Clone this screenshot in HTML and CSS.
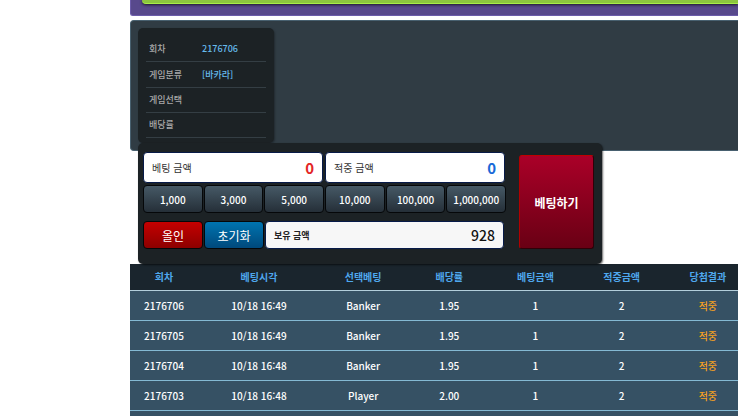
FILE: index.html
```html
<!DOCTYPE html>
<html lang="ko">
<head>
<meta charset="utf-8">
<title>바카라</title>
<link rel="stylesheet" href="styles.css">
</head>
<body>
<main class="page">
  <div class="banner"><div class="banner-bar"></div></div>
  <section class="game">
    <dl class="info">
      <div class="info-row"><dt>회차</dt><dd>2176706</dd></div>
      <div class="info-row"><dt>게임분류</dt><dd>[바카라]</dd></div>
      <div class="info-row"><dt>게임선택</dt><dd></dd></div>
      <div class="info-row"><dt>배당률</dt><dd></dd></div>
    </dl>
  </section>
  <form class="bet">
    <div class="bet-fields">
      <div class="amounts">
        <div class="field"><label for="stake">베팅 금액</label><input id="stake" class="red" type="text" value="0"></div>
        <div class="field"><label for="win">적중 금액</label><input id="win" class="blue" type="text" value="0"></div>
      </div>
      <div class="chips">
        <button type="button" class="chip">1,000</button>
        <button type="button" class="chip">3,000</button>
        <button type="button" class="chip">5,000</button>
        <button type="button" class="chip">10,000</button>
        <button type="button" class="chip">100,000</button>
        <button type="button" class="chip">1,000,000</button>
      </div>
      <div class="actions">
        <button type="button" class="chip all-in">올인</button>
        <button type="reset" class="chip clear">초기화</button>
        <div class="field balance"><label for="balance">보유 금액</label><input id="balance" type="text" value="928" readonly></div>
      </div>
    </div>
    <button type="button" class="submit">베팅하기</button>
  </form>
  <div class="history-wrap">
    <table class="history">
      <colgroup><col class="c-round"><col class="c-time"><col><col><col><col><col></colgroup>
      <thead>
        <tr><th>회차</th><th>베팅시각</th><th>선택베팅</th><th>배당률</th><th>베팅금액</th><th>적중금액</th><th>당첨결과</th></tr>
      </thead>
      <tbody>
        <tr><td>2176706</td><td>10/18 16:49</td><td>Banker</td><td>1.95</td><td>1</td><td>2</td><td class="hit">적중</td></tr>
        <tr><td>2176705</td><td>10/18 16:49</td><td>Banker</td><td>1.95</td><td>1</td><td>2</td><td class="hit">적중</td></tr>
        <tr><td>2176704</td><td>10/18 16:48</td><td>Banker</td><td>1.95</td><td>1</td><td>2</td><td class="hit">적중</td></tr>
        <tr><td>2176703</td><td>10/18 16:48</td><td>Player</td><td>2.00</td><td>1</td><td>2</td><td class="hit">적중</td></tr>
      </tbody>
    </table>
  </div>
</main>
</body>
</html>
```
FILE: styles.css
```css
* { box-sizing: border-box; }

body {
  margin: 0;
  background: #fff;
  font-family: "Noto Sans CJK KR", sans-serif;
  font-size: 10px;
}

button, input { font-family: inherit; }

.page { margin-left: 130px; }

.banner {
  padding: 0 0 11px 11px;
  background: #58498c;
  border: 1px solid #6c5caa;
  border-width: 0 0 1px 1px;
  border-radius: 0 0 0 3px;
}

.banner-bar {
  height: 4px;
  background: #8cc63f;
  border-bottom: 1px solid #a8ee48;
  border-radius: 0 0 0 4px;
  box-shadow: 0 1px 3px rgba(0, 0, 0, 0.7);
}

.game {
  margin-top: 4px;
  padding: 7px;
  background: #303c44;
  border: 1px solid #48606f;
  border-right: 0;
  border-radius: 4px 0 0 4px;
}

.info {
  width: 136px;
  margin: 0;
  padding: 8px 8px 5px;
  background: #1c2225;
  border-radius: 5px;
  box-shadow: 1px 1px 2px rgba(0, 0, 0, 0.3);
}

.info-row {
  display: flex;
  height: 25px;
  align-items: center;
  padding: 0 3px;
  border-bottom: 1px solid #343e44;
  font-size: 9px;
  font-weight: 500;
  line-height: 14px;
}

.info-row:nth-child(-n+2) { height: 26px; }
.info-row dt { width: 53px; color: #a9a9a9; }
.info-row dd { margin: 0; color: #66bbee; }

.bet {
  position: relative;
  display: flex;
  gap: 13px;
  width: 464px;
  margin: -8px 0 0 8px;
  padding: 9px 8px 15px 5px;
  background: #1c2225;
  border-radius: 5px;
  box-shadow: 1px 1px 2px rgba(0, 0, 0, 0.6);
}

.bet-fields { flex: 1; min-width: 0; }

.amounts {
  display: grid;
  grid-template-columns: minmax(0, 1fr) minmax(0, 1fr);
  gap: 2px;
  padding-right: 1px;
}

.field {
  display: flex;
  align-items: center;
  height: 31px;
  padding: 0 8px;
  background: #fff;
  border: 1px solid #071a48;
  border-radius: 4px;
}

.field label { flex: none; color: #333; }

.field input {
  flex: 1;
  width: 0;
  min-width: 0;
  height: 26px;
  padding: 0;
  border: 0;
  background: transparent;
  color: #111;
  font-size: 14px;
  font-weight: 500;
  text-align: right;
}

.field .red,
.field .blue {
  font-size: 15px;
  font-weight: 700;
}

.field .red { color: #e32626; }
.field .blue { color: #1769d8; }

.chips {
  display: grid;
  grid-template-columns: repeat(6, minmax(0, 1fr));
  gap: 1px;
  margin-top: 2px;
}

.chip {
  height: 28px;
  padding: 0;
  border: 1px solid #050709;
  border-radius: 4px;
  background: linear-gradient(#465966, #252f38);
  color: #fff;
  font-size: 10px;
  font-weight: 500;
}

.actions {
  display: grid;
  grid-template-columns: 60px 60px minmax(0, 1fr);
  gap: 1px;
  margin-top: 8px;
  padding-right: 2px;
}

.actions .chip { font-size: 12px; font-weight: 400; }
.actions .all-in { background: linear-gradient(#c50000, #8d0000); }
.actions .clear { background: linear-gradient(#0074b0, #00497c); }

.balance { height: 28px; background: #f7f7f7; }
.field.balance label { color: #222; font-size: 9px; font-weight: 700; }

.submit {
  width: 75px;
  margin: 3px 0 0;
  padding: 0;
  border: 1px solid;
  border-color: #c00000 #300008 #300008 #b00000;
  border-radius: 3px;
  background: linear-gradient(#aa0028, #690014);
  color: #fff;
  font-size: 12px;
  font-weight: 700;
}

.history-wrap { overflow: hidden; }

.history {
  width: 100%;
  min-width: 621px;
  table-layout: fixed;
  border-collapse: separate;
  border-spacing: 0;
  background: #365164;
  color: #fff;
  text-align: center;
}

.c-round { width: 68px; }
.c-time { width: 122px; }

.history th,
.history td {
  height: 30px;
  padding: 0;
  border-bottom: 1px solid #84b9d3;
  font-weight: 500;
  line-height: 16px;
}

.history th {
  height: 27px;
  background: #1a252d;
  border-bottom-color: #b3cedb;
  color: #4fa8ee;
  font-weight: 700;
}

.history tbody tr:last-child td {
  height: 35px;
  padding-bottom: 5px;
  border-bottom: 0;
  background: linear-gradient(#84b9d3, #84b9d3) 0 29px / 100% 1px no-repeat;
}

.history .hit { color: #f5a01e; }
```
